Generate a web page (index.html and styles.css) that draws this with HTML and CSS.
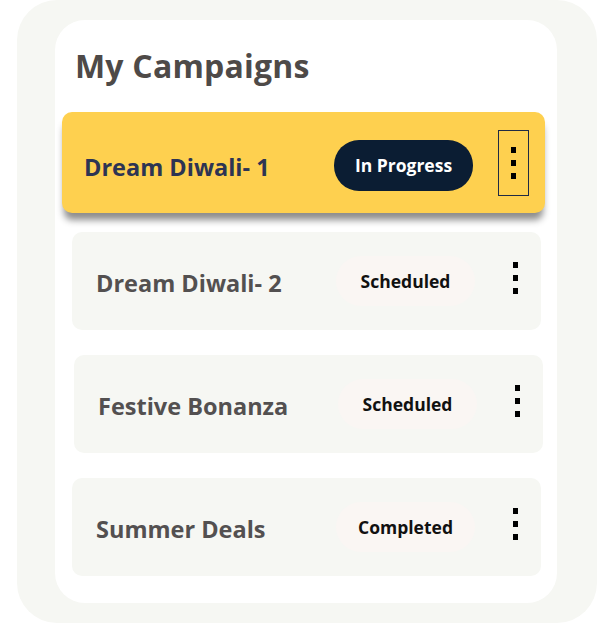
FILE: index.html
```html
<!DOCTYPE html>
<html lang="en">
<head>
<meta charset="utf-8">
<title>My Campaigns</title>
<link rel="stylesheet" href="styles.css">
</head>
<body>
<div class="frame">
  <section class="panel">
    <h1 class="heading">My Campaigns</h1>
    <div class="list">
      <div class="campaign campaign--active">
        <span class="name">Dream Diwali- 1</span>
        <span class="status status--progress">In Progress</span>
        <button class="menu menu--boxed" aria-label="More options"><i></i><i></i><i></i></button>
      </div>
      <div class="campaign campaign--a">
        <span class="name">Dream Diwali- 2</span>
        <span class="status">Scheduled</span>
        <button class="menu" aria-label="More options"><i></i><i></i><i></i></button>
      </div>
      <div class="campaign campaign--b">
        <span class="name">Festive Bonanza</span>
        <span class="status">Scheduled</span>
        <button class="menu" aria-label="More options"><i></i><i></i><i></i></button>
      </div>
      <div class="campaign campaign--c">
        <span class="name">Summer Deals</span>
        <span class="status">Completed</span>
        <button class="menu" aria-label="More options"><i></i><i></i><i></i></button>
      </div>
    </div>
  </section>
</div>
</body>
</html>
```

FILE: styles.css
```css
* { box-sizing: border-box; }
html, body { margin: 0; padding: 0; background: #ffffff; }
body { width: 610px; height: 625px; overflow: hidden; font-family: "Open Sans", "Liberation Sans", sans-serif; }

.frame {
  margin-left: 17px;
  width: 580px;
  height: 623px;
  background: #f6f7f3;
  border-radius: 40px;
  padding: 20px 40px 20px 38px;
}

.panel {
  background: #ffffff;
  border-radius: 30px;
  height: 583px;
  padding: 24px 12px 0 7px;
}

.heading {
  margin: 0 0 0 13px;
  font-size: 32px;
  line-height: 44px;
  font-weight: 700;
  color: #4e4a48;
  letter-spacing: 0.2px;
}

.list {
  margin-top: 24px;
  display: flex;
  flex-direction: column;
}

.campaign {
  display: grid;
  grid-template-columns: 1fr 139px 31px;
  column-gap: 25px;
  align-items: center;
  height: 98px;
  border-radius: 10px;
  background: #f6f7f3;
  padding: 0 10px 0 24px;
}

.campaign--active {
  height: 101px;
  background: #fed04f;
  padding: 0 16px 0 22px;
  column-gap: 25px;
  box-shadow: 0 9px 7px -2px rgba(0, 0, 0, 0.45);
  position: relative;
  z-index: 1;
}
.campaign--a { margin: 19px 4px 0 10px; }
.campaign--b { margin: 25px 2px 0 12px; }
.campaign--c { margin: 25px 4px 0 10px; }

.name {
  font-size: 23.5px;
  font-weight: 700;
  color: #535050;
  padding-top: 4px;
  white-space: nowrap;
}
.campaign--active .name { color: #2d3453; padding-top: 8px; }

.status {
  height: 50px;
  border-radius: 25px;
  background: #faf6f3;
  color: #111111;
  font-size: 17.5px;
  font-weight: 700;
  display: flex;
  align-items: center;
  justify-content: center;
}
.status--progress {
  height: 51px;
  background: #0b1d33;
  color: #ffffff;
  padding-bottom: 2px;
  margin-top: 6px;
}

.menu {
  width: 31px;
  height: 66px;
  padding: 0;
  margin: 0;
  border: 0;
  background: transparent;
  display: flex;
  flex-direction: column;
  align-items: center;
  justify-content: center;
  gap: 7px;
}
.menu i {
  display: block;
  width: 5px;
  height: 6px;
  background: #000000;
}
.menu--boxed {
  border: 1.5px solid #1f2a44;
}
.campaign--a .menu, .campaign--b .menu, .campaign--c .menu { margin-top: -6px; }
```
